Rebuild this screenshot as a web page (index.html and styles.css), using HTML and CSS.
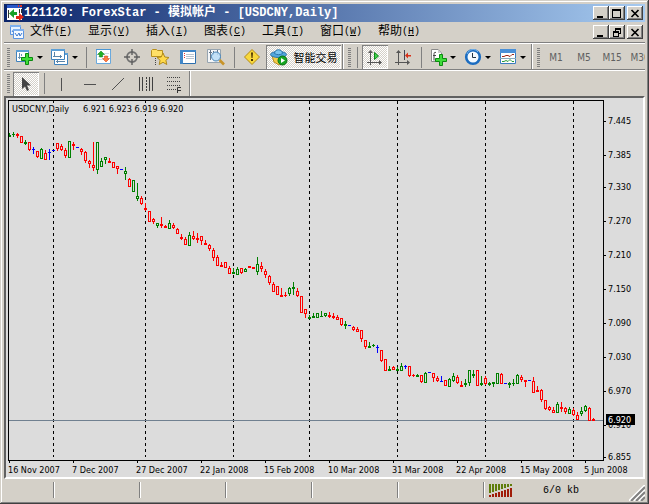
FILE: index.html
```html
<!DOCTYPE html>
<html lang="zh-CN">
<head>
    <meta charset="UTF-8">
    <meta name="viewport" content="width=device-width, initial-scale=1.0">
    <title>ForexStar - USDCNY,Daily</title>
    <link rel="stylesheet" href="styles.css">
</head>
<body>
<div class="window">
    <header class="titlebar">
        <svg class="app-icon" width="18" height="16" viewBox="0 0 18 16">
            <path fill="#fff" d="M1 0h15v15H1z"/>
            <path fill="#2858c8" d="M1 0h15v3H1z"/>
            <path fill="#e03020" d="M12 0h1v2h-1zM14 0h2v2h-2z"/>
            <path stroke="#333" d="M2.500 5v8M13.500 4v4M15.500 4v4"/>
            <path fill="#18a028" d="M8 4v3h3v3H8v3L3 8.500z"/>
            <path fill="#e02818" d="M10 11h3V8l5 4-5 4v-2h-3z"/>
        </svg>
        <h1>121120: ForexStar - 模拟帐户 - [USDCNY,Daily]</h1>
        <div class="caption-buttons">
            <button class="cap" aria-label="Minimize"><svg width="10" height="9"><path fill="#000" d="M1 7h6v2H1z"/></svg></button>
            <button class="cap" aria-label="Maximize"><svg width="10" height="9"><path fill="#000" fill-rule="evenodd" d="M0 0h9v9H0zM1 2v6h7V2z"/></svg></button>
            <button class="cap close" aria-label="Close"><svg width="10" height="9"><path stroke="#000" stroke-width="1.700" d="M1.500 1l7 7M8.500 1l-7 7"/></svg></button>
        </div>
    </header>

    <nav class="menubar">
        <svg class="doc-icon" width="16" height="16" viewBox="0 0 16 16">
            <path fill="#e8f2ff" stroke="#5b94e0" d="M1.500 1.500h10v9h-10z"/>
            <path fill="#7fb0ee" d="M1 1h11v2H1z"/>
            <path fill="none" stroke="#3a78d0" d="M3 8l2-3 2 3 2-3"/>
            <path fill="#f4f9ff" stroke="#5b94e0" d="M4.500 5.500h10v9h-10z"/>
            <path fill="#7fb0ee" d="M4 5h11v2H4z"/>
            <path fill="none" stroke="#3a78d0" d="M6 9l2 3 2-3 1 3 2-3"/>
        </svg>
        <a href="#">文件<span>(<u>F</u>)</span></a>
        <a href="#">显示<span>(<u>V</u>)</span></a>
        <a href="#">插入<span>(<u>I</u>)</span></a>
        <a href="#">图表<span>(<u>C</u>)</span></a>
        <a href="#">工具<span>(<u>T</u>)</span></a>
        <a href="#">窗口<span>(<u>W</u>)</span></a>
        <a href="#">帮助<span>(<u>H</u>)</span></a>
        <div class="caption-buttons">
            <button class="cap" aria-label="Minimize chart"><svg width="10" height="9"><path fill="#000" d="M1 7h6v2H1z"/></svg></button>
            <button class="cap" aria-label="Restore chart"><svg width="10" height="9"><path fill="#000" fill-rule="evenodd" d="M3 0h6v6H7V5h1V2H4v1H3zM1 3h6v6H1zM2 5v3h4V5z"/></svg></button>
            <button class="cap close" aria-label="Close chart"><svg width="10" height="9"><path stroke="#000" stroke-width="1.700" d="M1.500 1l7 7M8.500 1l-7 7"/></svg></button>
        </div>
    </nav>

    <div class="toolbar">
        <div class="group">
            <i class="grip"></i>
            <button class="drop" aria-label="New chart">
                <svg width="18" height="18" viewBox="0 0 18 18">
                    <path fill="#fff" stroke="#3f82bd" d="M.500 2.500h12v11H.500z"/><path fill="#5c9fd6" d="M0 2h13v2H0z"/>
                    <path stroke="#6890b0" d="M3.500 5v6M2 9.500h6M5.500 6v2"/>
                    <path fill="#3fdc3a" stroke="#0b8a10" d="M9.500 5.500h3v4h4v3h-4v4h-3v-4h-4v-3h4z"/>
                </svg>
            </button>
            <button class="drop" aria-label="Profiles">
                <svg width="18" height="18" viewBox="0 0 18 18">
                    <path fill="#fff" stroke="#3f82bd" d="M3.500 5.500h13v11h-13z"/><path fill="#5c9fd6" d="M3 5h14v2H3z"/>
                    <path fill="#fff" stroke="#3f82bd" d="M.500 1.500h13v10H.500z"/><path fill="#5c9fd6" d="M0 1h14v2H0z"/>
                    <path stroke="#5a84a8" d="M3.500 4v5M2 8.500h9M9.500 7v3M6.500 11v4M5 13.500h9"/>
                </svg>
            </button>
            <i class="sep"></i>
            <button class="tool" aria-label="Market watch">
                <svg width="18" height="18" viewBox="0 0 18 18">
                    <path fill="#fff" stroke="#6aa9dd" d="M1.500 1.500h14v14h-14z"/><path stroke="#4a96d4" d="M1 1.500h15"/>
                    <path stroke="#cfdce6" d="M3 5.500h11M3 8.500h11M3 11.500h11"/>
                    <path fill="#22b022" stroke="#0a7a10" stroke-width=".5" d="M6 3l3.500 3.500H7.500V9h-3V6.500h-2z"/>
                    <path fill="#ff7a3c" stroke="#d03a10" stroke-width=".5" d="M9.500 8h3v2.500h2L11 14l-3.500-3.500h2z"/>
                </svg>
            </button>
            <button class="tool" aria-label="Data window">
                <svg width="18" height="18" viewBox="0 0 18 18">
                    <circle cx="9" cy="9" r="5" fill="none" stroke="#707070" stroke-width="1.800"/>
                    <path stroke="#606060" stroke-width="1.400" d="M9 1v6M9 11v6M1 9h6M11 9h6"/>
                </svg>
            </button>
            <button class="tool" aria-label="Navigator">
                <svg width="20" height="18" viewBox="0 0 20 18">
                    <path fill="#ffe066" stroke="#b8901c" d="M1.500 2.500l1-1h4l1 1h5v6h-11z"/>
                    <path stroke="#444" stroke-dasharray="1 1" d="M5.500 10v7"/>
                    <path fill="#ffd94a" stroke="#b08a1a" d="M13 5l1.800 4 4.200.5-3.100 2.800.9 4.200-3.800-2.200-3.800 2.200.9-4.200L7 9.500l4.200-.5z"/>
                </svg>
            </button>
            <button class="tool" aria-label="Terminal">
                <svg width="18" height="18" viewBox="0 0 18 18">
                    <path fill="#fff" stroke="#2c6fae" d="M1.500 2.500h15v13h-15z"/><path fill="#3f86c8" d="M1 2h16v2H1zM1 4h3v12H1z"/>
                    <path stroke="#d33" stroke-dasharray="1 1" d="M5.500 5v5"/><path stroke="#b8c4d0" d="M7 6.500h8M7 8.500h8M7 10.500h8"/>
                </svg>
            </button>
            <button class="tool" aria-label="Strategy tester">
                <svg width="20" height="18" viewBox="0 0 20 18">
                    <path fill="#f4f6f8" stroke="#96a4b0" d="M1.500 1.500h13v13h-13z"/>
                    <path stroke="#66788a" d="M4.500 2v10M7.500 3v4M11.500 2v5M3 4.500h3"/>
                    <circle cx="10" cy="8.500" r="4.500" fill="#b8dcf6" fill-opacity=".85" stroke="#4a86b8"/>
                    <path stroke="#c8942a" stroke-width="2.600" d="M13.500 12l4.500 4.500"/>
                </svg>
            </button>
            <i class="sep"></i>
            <button class="tool" aria-label="New order">
                <svg width="18" height="18" viewBox="0 0 18 18">
                    <path fill="#f8d83c" stroke="#b48a14" stroke-linejoin="round" d="M9 1.500L16.500 9 9 16.500 1.500 9z"/>
                    <path fill="#4a3200" d="M8 4.500h2L9.500 10h-1zM8 11h2v2H8z"/>
                </svg>
            </button>
            <button class="expert pressed">
                <svg width="18" height="18" viewBox="0 0 18 18">
                    <path fill="#f4cc48" stroke="#b88a1c" d="M2 8h13l-2 7-4 2-5-3z"/>
                    <ellipse cx="8.500" cy="6.500" rx="8" ry="3" fill="#52a6dc" stroke="#2a76ac"/>
                    <path fill="#7cc4ee" stroke="#2a76ac" d="M4.500 5.500c0-5 8-5 8 0-2 1.500-6 1.500-8 0z"/>
                    <circle cx="12.500" cy="12.500" r="4.500" fill="#17a522" stroke="#08720f"/><path fill="#fff" d="M11 10l4 2.500-4 2.500z"/>
                </svg>
                <span>智能交易</span>
            </button>
        </div>
        <div class="group">
            <i class="grip"></i>
            <i class="sep"></i>
            <button class="tool pressed" aria-label="Auto scroll">
                <svg width="18" height="18" viewBox="0 0 18 18">
                    <path stroke="#555" d="M4.500 3v14M1 14.500h14"/><path fill="#555" d="M2 5l2.500-3L7 5zM13 12l3 2.500-3 2.500z"/>
                    <path fill="#3fd04a" stroke="#0b8a18" d="M8.500 4.500l4 3.500-4 3.500z"/>
                </svg>
            </button>
            <button class="tool" aria-label="Chart shift">
                <svg width="18" height="18" viewBox="0 0 18 18">
                    <path stroke="#555" d="M4.500 3v14M1 14.500h14"/><path fill="#555" d="M2 5l2.500-3L7 5zM13 12l3 2.500-3 2.500z"/>
                    <path stroke="#445" d="M10.500 2v10"/><path fill="#d83018" d="M11 7.500l3-3V7h3v1.500h-3v2z"/>
                </svg>
            </button>
            <i class="sep"></i>
            <button class="drop" aria-label="Indicators">
                <svg width="18" height="18" viewBox="0 0 18 18">
                    <path fill="#fff" stroke="#8a8a8a" d="M2.500 1.500h7l3 3v9h-10z"/><path fill="#ccc" d="M9 1l4 4H9z"/>
                    <path fill="none" stroke="#444" d="M7 4.500c-2-1-2 1-2 2v6M4 7.500h3"/>
                    <path fill="#3fdc3a" stroke="#0b8a10" d="M10.500 6.500h3v4h4v3h-4v4h-3v-4h-4v-3h4z"/>
                </svg>
            </button>
            <button class="drop" aria-label="Periods">
                <svg width="18" height="18" viewBox="0 0 18 18">
                    <circle cx="9" cy="9" r="6.800" fill="#f4faff" stroke="#1b6cc0" stroke-width="2.600"/>
                    <path fill="none" stroke="#234" d="M8.500 5v4.500H12"/>
                    <path fill="none" stroke="#7ab8f0" d="M3 6c2-5 8-6 11-2"/>
                </svg>
            </button>
            <button class="drop" aria-label="Templates">
                <svg width="18" height="18" viewBox="0 0 18 18">
                    <path fill="#fff" stroke="#3a7cc0" d="M1.500 1.500h15v14h-15z"/><path fill="#4a90d8" d="M1 1h16v4H1z"/>
                    <path fill="none" stroke="#a02818" d="M3 8.500h2l2-1h2l2 1 2-2h2"/>
                    <path stroke="#8ab" d="M1 10.500h16"/>
                    <path fill="none" stroke="#2a9a38" d="M3 13.500h2l2-1 2 1 2-2 2 2h2"/>
                </svg>
            </button>
        </div>
        <div class="group last">
            <i class="grip"></i>
            <button class="tool">M1</button>
            <button class="tool">M5</button>
            <button class="tool">M15</button>
            <button class="tool">M30</button>
        </div>
    </div>

    <div class="toolbar">
        <div class="group">
            <i class="grip"></i>
            <button class="tool pressed" aria-label="Cursor">
                <svg width="18" height="18" viewBox="0 0 18 18"><path fill="#444" d="M5 2v12l3-2.500 2 4.500 2-1-2-4.500h4z"/></svg>
            </button>
            <i class="sep"></i>
            <button class="tool" aria-label="Vertical line"><svg width="18" height="18"><path stroke="#505050" d="M8.500 3v13"/></svg></button>
            <button class="tool" aria-label="Horizontal line"><svg width="18" height="18"><path stroke="#505050" d="M3 9.500h12"/></svg></button>
            <button class="tool" aria-label="Trend line"><svg width="18" height="18"><path stroke="#505050" d="M3 15L15 3"/></svg></button>
            <button class="tool" aria-label="Cycle lines"><svg width="18" height="18"><path stroke="#404040" d="M2.500 2v14M5.500 2v14M12.500 2v14M15.500 2v14"/><path stroke="#404040" stroke-dasharray="2 1" d="M9.500 2v14"/></svg></button>
            <button class="tool" aria-label="Fibonacci"><svg width="18" height="18"><path stroke="#404040" stroke-dasharray="1 1" d="M2 2.500h14M2 6.500h14M2 10.500h14M2 14.500h9"/><path fill="none" stroke="#333" d="M12.500 18v-5.500H16M13 15.500h3"/></svg></button>
        </div>
    </div>

    <main class="workspace">
        <svg class="chart" id="chart" viewBox="6 98 637 379">
            <g id="months"></g>
            <path class="price-line" d="M9 420.500h594"/>
            <g id="candles"></g>
            <path class="frame" d="M8.500 100.500h595v360H8.500z"/>
            <rect x="11" y="103" width="176" height="11" fill="#dcdcdc"/>
            <text x="12" y="112">USDCNY,Daily</text>
            <text x="83" y="112">6.921 6.923 6.919 6.920</text>
            <g id="axes"></g>
            <rect x="606" y="414" width="29" height="11" fill="#000"/>
            <text class="current" x="608" y="423">6.920</text>
        </svg>
    </main>

    <footer class="statusbar">
        <div></div><div></div><div></div><div></div><div></div><div></div>
        <div class="traffic">
            <svg width="24" height="13">
                <path stroke="#5f7d0a" stroke-width="2" d="M1 0v9M4 0v8M7 0v7M10 0v6M13 0v5M16 0v4M19 0v3M22 0v2"/>
                <path stroke="#a01c08" stroke-width="2" d="M1 11v2M4 10v3M7 9v4M10 8v5M13 7v6M16 6v7M19 5v8M22 4v9"/>
            </svg>
            <span>6/0 kb</span>
            <svg class="resize" width="16" height="16">
                <path stroke="#fff" stroke-width="2" d="M0 16L16 0M5 16L16 5M10 16l6-6"/>
                <path stroke="#808080" stroke-width="2" d="M2 16L16 2M7 16l9-9M12 16l4-4"/>
            </svg>
        </div>
    </footer>
</div>
<script src="chart.js"></script>
</body>
</html>
```

FILE: styles.css
```css
* {
    box-sizing: border-box;
}
body {
    margin: 0;
    background: #d4d0c8;
    color: #000;
    font-family: "Liberation Mono", "Noto Sans CJK SC", monospace;
    font-size: 10px;
}
svg {
    display: block;
    flex: none;
}
button {
    font: inherit;
    color: inherit;
    padding: 0;
    border: 0;
    background: none;
}
.window {
    display: flex;
    flex-direction: column;
    min-height: 100vh;
    padding: 4px 4px 3px;
    background: #d4d0c8;
    box-shadow: inset -1px -1px #404040, inset 1px 1px #d4d0c8, inset -2px -2px #808080, inset 2px 2px #fff;
}

/* title and menu */
.titlebar {
    display: flex;
    align-items: center;
    height: 18px;
    padding: 0 2px;
    background: linear-gradient(to right, #0a246a, #a6caf0);
}
.titlebar h1 {
    margin: 0;
    color: #fff;
    font-size: 12px;
    line-height: 18px;
    white-space: pre;
}
.caption-buttons {
    display: flex;
    margin-left: auto;
}
.cap {
    display: flex;
    align-items: center;
    justify-content: center;
    width: 16px;
    height: 14px;
    background: #d4d0c8;
    box-shadow: inset -1px -1px #404040, inset 1px 1px #fff, inset -2px -2px #808080;
}
.cap.close {
    margin-left: 2px;
}
.menubar {
    display: flex;
    align-items: center;
    height: 21px;
    padding: 0 2px 0 5px;
    border-bottom: 1px solid #808080;
}
.doc-icon {
    margin-right: 5px;
}
.menubar a {
    display: flex;
    align-items: center;
    width: 58px;
    color: #000;
    font-size: 12px;
    line-height: 18px;
    text-decoration: none;
    white-space: nowrap;
}
.menubar span {
    font-size: 10px;
}

/* toolbars */
.toolbar {
    display: flex;
    height: 27px;
    border-top: 1px solid #fff;
    overflow: hidden;
}
.toolbar + .toolbar {
    height: 26px;
    box-shadow: 0 -1px #808080;
}
.group {
    display: flex;
    flex: none;
    align-items: center;
    padding-right: 1px;
    border-right: 1px solid #808080;
    box-shadow: 1px 0 #fff;
    margin-right: 2px;
}
.group.last {
    border: 0;
    box-shadow: none;
}
.grip {
    width: 3px;
    height: 19px;
    margin: 0 2px 0 3px;
    background: repeating-linear-gradient(#808080 0 1px, #d4d0c8 1px 2px);
}
.sep {
    width: 1px;
    height: 21px;
    margin: 0 3px 0 4px;
    background: #808080;
}
.tool,
.drop,
.expert {
    display: flex;
    align-items: center;
    justify-content: center;
    width: 28px;
    height: 24px;
    color: #606060;
    font-family: "DejaVu Sans Condensed", "DejaVu Sans", sans-serif;
}
.drop {
    width: 35px;
    gap: 3px;
}
.drop::after {
    content: "";
    border: 3px solid transparent;
    border-top-color: #000;
    border-bottom: 0;
}
.expert {
    width: 75px;
    gap: 6px;
    color: #000;
    font-family: "Noto Sans CJK SC", sans-serif;
    font-size: 11px;
}
.pressed {
    background: repeating-conic-gradient(#fff 0 25%, #d4d0c8 0 50%) 0 0 / 2px 2px;
    box-shadow: inset 1px 1px #808080, inset -1px -1px #fff;
}
.tool.pressed {
    width: 26px;
    margin: 0 1px;
}

/* chart */
.workspace {
    flex: 1;
    border: 2px solid;
    border-color: #606060 #fff #fff #606060;
    background: #dcdcdc;
}
.chart {
    width: 100%;
    height: auto;
    shape-rendering: crispEdges;
    font-family: "DejaVu Sans Condensed", "DejaVu Sans", sans-serif;
    font-size: 9px;
}
.current {
    fill: #fff;
}
.frame,
.tick,
.month {
    fill: none;
    stroke: #000;
}
.month {
    stroke-dasharray: 3 3;
}
.price-line {
    stroke: #708090;
}

/* status bar */
.statusbar {
    display: grid;
    grid-template-columns: 51px repeat(5, 86px) 1fr;
    height: 22px;
}
.statusbar div {
    margin: 3px 0;
    border-right: 1px solid #fff;
    box-shadow: inset -1px 0 #808080;
}
.statusbar .traffic {
    display: flex;
    align-items: center;
    gap: 30px;
    margin: 0;
    padding-left: 4px;
    border: 0;
    box-shadow: none;
}
.resize {
    align-self: flex-end;
    margin-left: auto;
}
```

FILE: chart.js
```js
// One row per day: colour, high, low, body top, body bottom
const candles = `
g133,136,135,136 g132,136,134,134 r133,137,134,135 r136,142,136,142 g140,144,142,143
r142,150,142,149 b147,153,149,149 r151,157,151,156 g148,158,149,158 r150,159,153,159
b149,159,152,152 b150,150,150,150 r143,150,143,148 r144,150,146,149 r148,157,150,155
g141,157,141,157 r142,149,144,145 b147,147,147,147 r148,154,149,151 r151,162,152,160
r160,167,161,163 r142,170,165,167 g142,173,142,169 g158,166,161,166 g157,163,157,159
r158,162,161,162 r162,167,162,167 r166,173,166,168 b169,169,169,169 g167,179,171,173
r178,186,179,186 g180,191,180,191 g183,200,196,198 r196,204,198,203 r203,210,208,209
r211,221,211,221 r218,223,219,221 g223,227,223,225 r217,227,224,225 r225,227,226,227
g220,228,223,228 r223,228,225,227 r228,233,229,233 r234,239,237,238 r237,244,239,244
g232,245,235,245 r231,239,236,238 r233,242,238,239 r236,244,236,240 r240,244,243,244
r244,250,245,248 r248,260,250,257 r255,265,257,265 r262,266,265,266 r262,267,262,267
r266,273,268,273 g268,273,272,273 g267,274,269,274 r268,273,268,272 g268,271,269,271
r266,267,266,267 r267,268,267,268 g257,274,264,271 r262,271,266,268 r269,277,271,274
r275,284,276,282 r282,291,284,291 r286,294,286,294 r288,296,295,296 r292,296,295,295
g287,295,288,293 g282,294,287,288 r288,296,291,295 r296,312,296,312 r309,317,309,313
g315,318,317,318 g313,317,316,317 g313,317,313,317 g311,316,316,316 g313,316,313,315
r312,317,315,316 r313,318,316,317 r315,319,317,319 r318,325,318,324 g321,328,324,325
b325,325,325,325 r326,330,327,329 r327,331,329,331 r330,341,330,338 r340,348,340,346
g342,347,346,347 g344,346,345,345 b345,352,347,347 r350,361,350,360 r359,370,359,370
g366,370,369,370 r366,369,367,369 g367,370,369,370 g363,370,366,370 b365,368,366,366
r366,376,366,375 r374,376,375,375 g374,376,375,376 r375,382,375,381 g372,382,373,382
b372,372,372,372 r373,381,373,377 r376,381,378,380 b376,381,381,381 r380,385,380,385
g378,386,379,386 g373,381,376,380 r375,383,377,382 r381,386,385,386 g379,386,383,384
g370,385,370,382 g370,377,374,375 r370,385,370,385 g376,385,383,384 r376,384,378,383
g382,385,383,384 g382,386,382,383 g373,383,373,383 r373,383,374,383 b383,383,383,383
g382,387,383,384 g379,385,383,383 g374,383,375,383 r375,381,377,379 r380,386,380,381
b380,380,380,380 r377,392,381,392 r386,391,390,391 r389,401,390,399 r400,409,400,408
r406,410,407,409 r407,412,410,412 g402,412,404,412 r402,411,407,408 r407,413,408,411
g407,413,409,413 r408,415,410,414 r412,419,415,419 g407,415,411,413 g405,411,406,410
r407,420,408,420 r418,420,419,420`.trim().split(/\s+/);

const colors = { r: '#ff0000', g: '#008000', b: '#0000ff' };

const prices = [
    [121, '7.445'], [155, '7.385'], [187, '7.330'], [221, '7.270'], [255, '7.210'], [289, '7.150'],
    [323, '7.090'], [357, '7.030'], [391, '6.970'], [425, '6.910'], [457, '6.855']
];
const dates = [
    '16 Nov 2007', '7 Dec 2007', '27 Dec 2007', '22 Jan 2008', '15 Feb 2008',
    '10 Mar 2008', '31 Mar 2008', '22 Apr 2008', '15 May 2008', '5 Jun 2008'
];
const months = [53, 145, 233, 309, 397, 485, 573];

// Candles are 4px apart, 3px wide
document.getElementById('candles').innerHTML = candles.map((row, i) => {
    const color = colors[row[0]];
    const [high, low, top, bottom] = row.slice(1).split(',').map(Number);
    const x = 9 + i * 4;
    const left = i ? x - 1 : x;
    let out = `<rect x="${x}" y="${high}" width="1" height="${low - high + 1}" fill="${color}"/>`;
    out += `<rect x="${left}" y="${top}" width="${x + 2 - left}" height="${bottom - top + 1}" fill="${color}"/>`;
    if (bottom - top > 1) {
        out += `<rect x="${x}" y="${top + 1}" width="1" height="${bottom - top - 1}" fill="#dcdcdc"/>`;
    }
    return out;
}).join('');

document.getElementById('months').innerHTML = months.map(x =>
    `<path class="month" d="M${x}.5 101v356"/>`
).join('');

document.getElementById('axes').innerHTML =
    prices.map(([y, label]) =>
        `<path class="tick" d="M604 ${y}.5h2"/><text x="608" y="${y + 3}">${label}</text>`
    ).join('') +
    dates.map((label, i) =>
        `<path class="tick" d="M${9 + i * 64}.5 461v2"/><text x="${8 + i * 64}" y="473">${label}</text>`
    ).join('');
```
